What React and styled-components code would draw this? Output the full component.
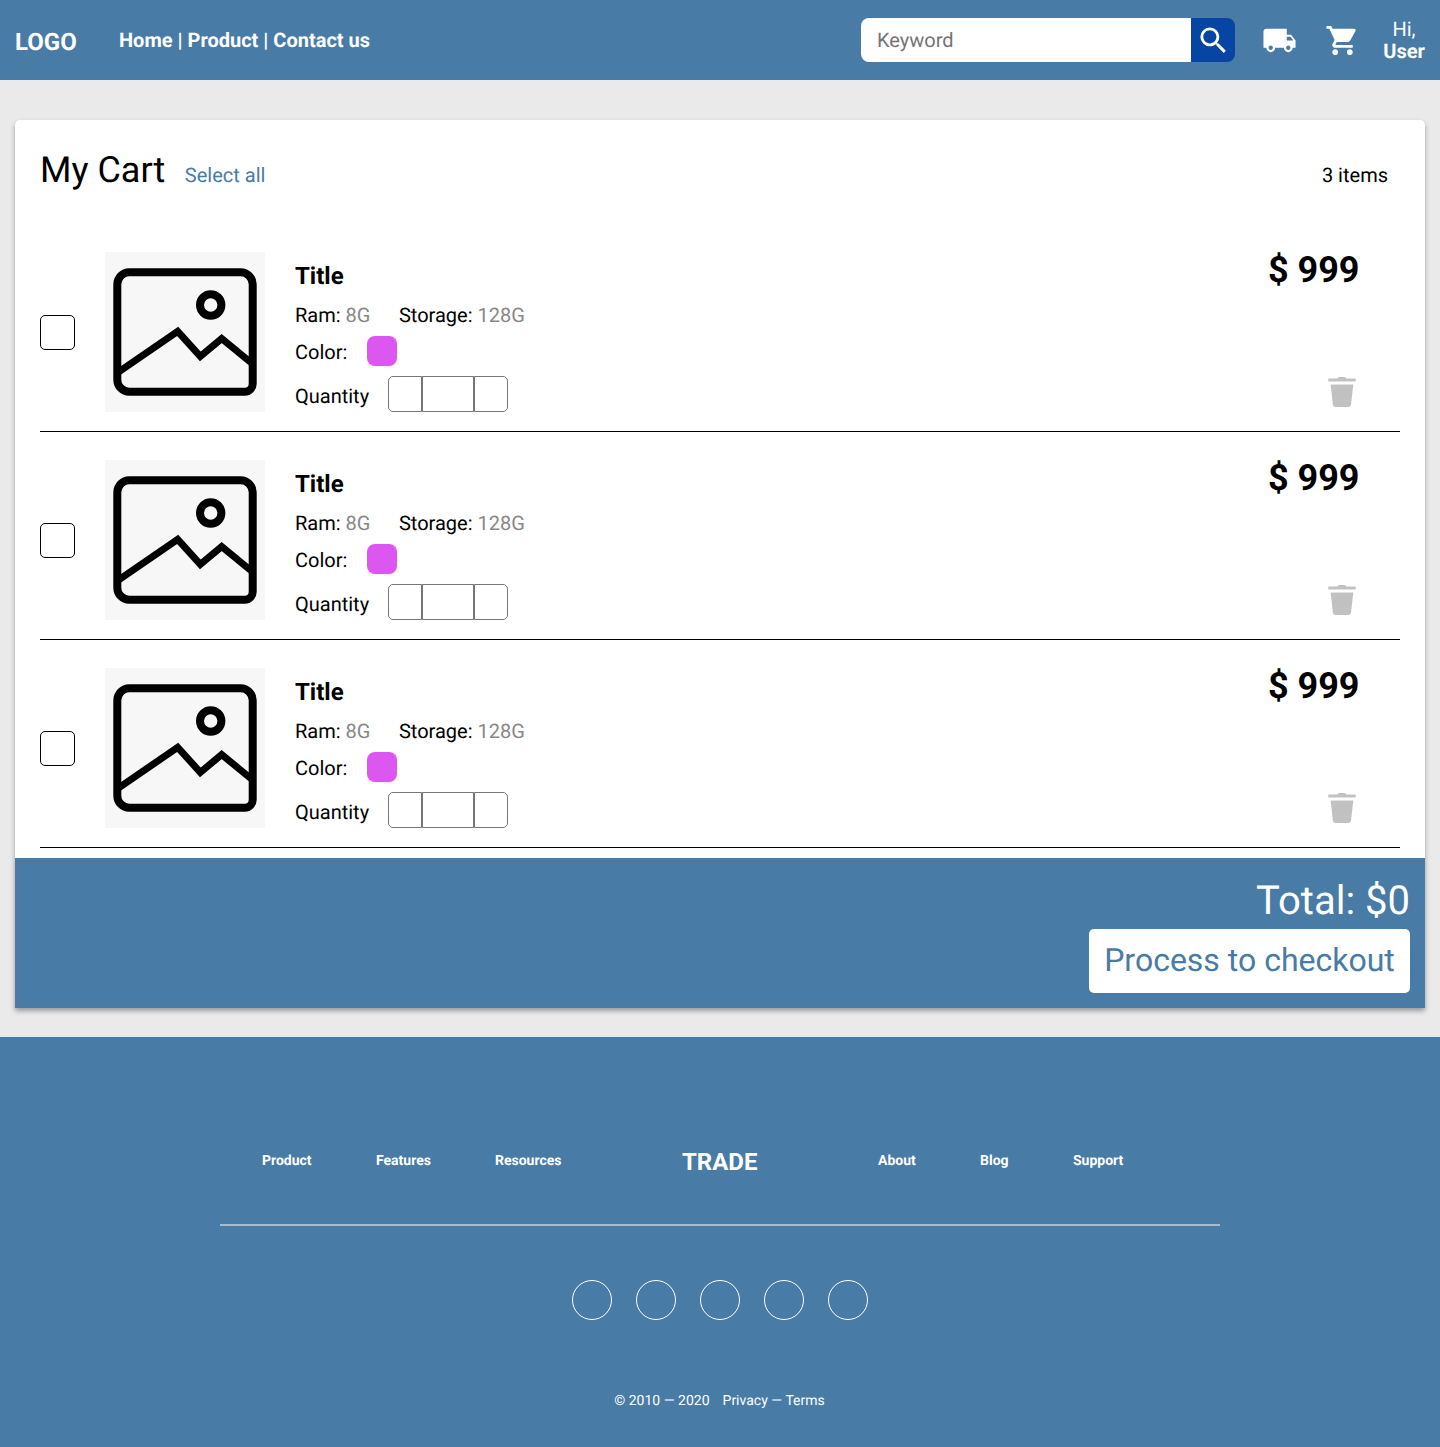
import React from "react";
import styled, { createGlobalStyle } from "styled-components";
import { MdLocalShipping, MdSearch, MdShoppingCart } from "react-icons/md";

const BLUE = "#487ba6";

const GlobalStyle = createGlobalStyle`
  * { box-sizing: border-box; }
  body {
    margin: 0;
    background: #eaeaea;
    color: #000;
    font-family: Roboto, "Liberation Sans", sans-serif;
    font-size: 20px;
    text-rendering: geometricPrecision;
  }
  input, button { font-family: inherit; text-rendering: inherit; }
`;

const Header = styled.header`
  display: flex;
  align-items: center;
  height: 80px;
  padding: 0 15px;
  background: ${BLUE};
  color: #fff;
`;

const Logo = styled.div`
  width: 104px;
  padding-top: 3px;
  font-size: 24px;
  line-height: 28px;
  font-weight: 700;
`;

const Nav = styled.nav`
  flex: 1;
  font-weight: 700;
  line-height: 24px;
`;

const Search = styled.form`
  display: flex;
  height: 44px;
  margin-right: 27px;
`;

const SearchInput = styled.input`
  width: 330px;
  padding: 0 16px;
  border: 0;
  border-radius: 8px 0 0 8px;
  font-size: 20px;
  &::placeholder { color: #757575; }
`;

const SearchButton = styled.button`
  display: flex;
  align-items: center;
  justify-content: center;
  width: 44px;
  padding: 0 0 0 1px;
  border: 0;
  border-radius: 0 8px 8px 0;
  background: #0645a4;
  color: #fff;
`;

const HeaderLink = styled.span`
  display: flex;
  margin-right: ${(p) => p.$gap}px;
`;

const Greeting = styled.div`
  width: 42px;
  line-height: 22px;
  text-align: center;
  strong { display: block; font-weight: 700; }
`;

const Card = styled.main`
  margin: 40px 15px 29px;
  background: #fff;
  border-radius: 5px 5px 0 0;
  box-shadow: 0 3px 5px rgba(0, 0, 0, 0.35);
`;

const CardHead = styled.div`
  display: flex;
  align-items: baseline;
  height: 104px;
  padding: 29px 37px 0 25px;
`;

const Heading = styled.h1`
  margin: 0 19.6px 0 0;
  font-size: 36px;
  line-height: 42px;
  font-weight: 400;
`;

const SelectAll = styled.a`
  flex: 1;
  color: ${BLUE};
`;

const List = styled.div`
  padding: 0 25px 10px;
`;

const Row = styled.article`
  display: flex;
  height: 208px;
  padding: 28px 40px 19px 0;
  border-bottom: 1px solid #000;
`;

const Check = styled.span`
  width: 35px;
  height: 35px;
  margin: 63px 30px 0 0;
  border: 1px solid #000;
  border-radius: 5px;
`;

const Thumb = styled.div`
  width: 160px;
  height: 160px;
  margin-right: 30px;
  background: #f7f7f7;
  svg { display: block; }
`;

const Details = styled.div`
  flex: 1;
`;

const Title = styled.h2`
  margin: 10px 0 12px;
  font-size: 24px;
  line-height: 28px;
  font-weight: 700;
`;

const Specs = styled.div`
  display: flex;
  gap: 28.5px;
  height: 34px;
  line-height: 27px;
  span { color: #888; }
`;

const Option = styled.div`
  display: flex;
  height: ${(p) => p.$height}px;
  margin-bottom: 10px;
  line-height: 24px;
`;

const OptionLabel = styled.span`
  width: ${(p) => p.$width}px;
  padding-top: ${(p) => p.$drop}px;
`;

const Swatch = styled.span`
  width: 30px;
  height: 30px;
  border-radius: 8px;
  background: #db57ef;
`;

const QtyCell = styled.span`
  width: ${(p) => p.$width}px;
  border: 1px solid #767676;
  &:first-of-type { border-radius: 5px 0 0 5px; }
  &:last-of-type { border-radius: 0 5px 5px 0; }
`;

const Stepper = styled.div`
  display: flex;
`;

const Side = styled.div`
  display: flex;
  flex-direction: column;
  align-items: flex-end;
  justify-content: space-between;
  height: 155px;
`;

const Price = styled.div`
  margin: -3px 0.5px 0 0;
  font-size: 36px;
  line-height: 42px;
  font-weight: 700;
`;

const TrashIcon = styled.svg`
  display: block;
  margin-right: 4px;
  fill: #c1c1c1;
`;

const Summary = styled.div`
  display: flex;
  flex-direction: column;
  align-items: flex-end;
  height: 150px;
  padding: 19px 15px 15px;
  background: ${BLUE};
  color: #fff;
`;

const Total = styled.div`
  margin-bottom: 5px;
  font-size: 40px;
  line-height: 47px;
`;

const Checkout = styled.button`
  width: 321px;
  height: 64px;
  padding: 0 0 2px;
  border: 0;
  border-radius: 5px;
  background: #fff;
  color: ${BLUE};
  font-size: 32px;
`;

const Footer = styled.footer`
  display: flex;
  flex-direction: column;
  align-items: center;
  height: 410px;
  padding-top: 100px;
  background: ${BLUE};
  color: #fff;
`;

const FooterNav = styled.nav`
  display: grid;
  grid-template-columns: 114px 119px 187px 196px 102px 93px 1fr;
  align-items: center;
  width: 1000px;
  height: 89px;
  padding: 0 0 41px 42px;
  border-bottom: 2px solid rgba(255, 255, 255, 0.5);
  font-size: 14px;
  font-weight: 700;
`;

const FooterLink = styled.span`
  padding-top: 2px;
  line-height: 16px;
`;

const Brand = styled.span`
  padding-top: 3px;
  font-size: 24px;
`;

const Socials = styled.div`
  display: flex;
  gap: 24px;
  margin: 54px 0 73px;
`;

const Social = styled.span`
  width: 40px;
  height: 40px;
  border: 1px solid #fff;
  border-radius: 50%;
`;

const Legal = styled.div`
  display: flex;
  gap: 13px;
  margin-right: 1px;
  font-size: 14px;
  line-height: 16px;
`;

function Picture() {
  return (
    <svg width="160" height="160" viewBox="0 0 160 160" fill="none" stroke="#000">
      <path
        strokeWidth="8"
        d="M24.3 20.3H135.7A12 12 0 0 1 147.7 32.3V131.7A8 8 0 0 1 139.7 139.7H24.3A12 12 0 0 1 12.3 127.7V32.3A12 12 0 0 1 24.3 20.3Z"
      />
      <circle cx="105.7" cy="53" r="10.7" strokeWidth="8" />
      <path strokeWidth="7" d="M13 120.4L72.7 79.3L95.3 104.4L116.7 86.6L146 110.6" />
    </svg>
  );
}

function Trash() {
  return (
    <TrashIcon width="28" height="30" viewBox="0 0 28 30">
      <path d="M.3 1.4H9.5Q10.3 0 11.5 0H16.2Q17.4 0 18.2 1.4H27.7V4.6H.3Z" />
      <path d="M2.6 7.4H25.3L23 27.6Q22.7 30 20.6 30H7.3Q5.2 30 4.9 27.6Z" />
    </TrashIcon>
  );
}

function CartRow() {
  return (
    <Row>
      <Check />
      <Thumb><Picture /></Thumb>
      <Details>
        <Title>Title</Title>
        <Specs>
          <div>Ram: <span>8G</span></div>
          <div>Storage: <span>128G</span></div>
        </Specs>
        <Option $height={30}>
          <OptionLabel $drop={4} $width={72}>Color:</OptionLabel>
          <Swatch />
        </Option>
        <Option $height={36}>
          <OptionLabel $drop={8} $width={93}>Quantity</OptionLabel>
          <Stepper>
            <QtyCell $width={34} />
            <QtyCell $width={52} />
            <QtyCell $width={34} />
          </Stepper>
        </Option>
      </Details>
      <Side>
        <Price>$ 999</Price>
        <Trash />
      </Side>
    </Row>
  );
}

export default function App() {
  return (
    <>
      <GlobalStyle />
      <Header>
        <Logo>LOGO</Logo>
        <Nav>Home | Product | Contact us</Nav>
        <Search>
          <SearchInput placeholder="Keyword" />
          <SearchButton type="button"><MdSearch size={35} /></SearchButton>
        </Search>
        <HeaderLink $gap={28}><MdLocalShipping size={35} /></HeaderLink>
        <HeaderLink $gap={23}><MdShoppingCart size={35} /></HeaderLink>
        <Greeting>Hi,<strong>User</strong></Greeting>
      </Header>
      <Card>
        <CardHead>
          <Heading>My Cart</Heading>
          <SelectAll>Select all</SelectAll>
          <span>3 items</span>
        </CardHead>
        <List>
          {[1, 2, 3].map((id) => <CartRow key={id} />)}
        </List>
        <Summary>
          <Total>Total: $0</Total>
          <Checkout>Process to checkout</Checkout>
        </Summary>
      </Card>
      <Footer>
        <FooterNav>
          <FooterLink>Product</FooterLink>
          <FooterLink>Features</FooterLink>
          <FooterLink>Resources</FooterLink>
          <Brand>TRADE</Brand>
          <FooterLink>About</FooterLink>
          <FooterLink>Blog</FooterLink>
          <FooterLink>Support</FooterLink>
        </FooterNav>
        <Socials>
          {[1, 2, 3, 4, 5].map((id) => <Social key={id} />)}
        </Socials>
        <Legal>
          <span>© 2010 — 2020</span>
          <span>Privacy — Terms</span>
        </Legal>
      </Footer>
    </>
  );
}
